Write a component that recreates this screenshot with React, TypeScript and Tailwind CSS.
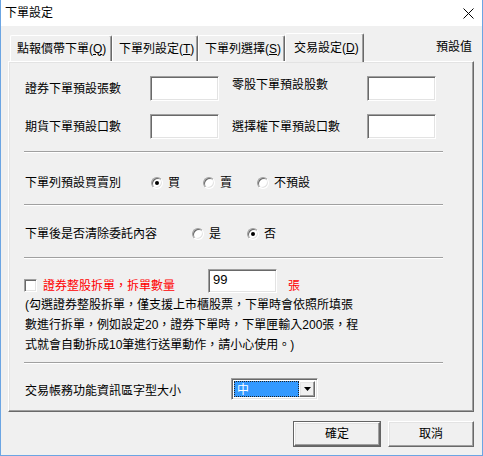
import React from "react";

const sunken =
  "border border-t-[#a0a0a0] border-l-[#a0a0a0] border-b-white border-r-white shadow-[inset_1px_1px_0_#696969,inset_-1px_-1px_0_#e3e3e3] bg-white";
const raised =
  "border border-t-white border-l-white border-b-[#696969] border-r-[#696969] shadow-[inset_-1px_-1px_0_#a0a0a0,inset_1px_1px_0_#e3e3e3]";

function Tab({ label, k, w, active }: { label: string; k: string; w: string; active?: boolean }) {
  return (
    <div
      className={`${w} ${raised} border-b-0 rounded-t-[2px] bg-[#f0f0f0] flex items-center shadow-[inset_-1px_0_0_#a0a0a0] ${
        active ? "h-[29px] pl-[8px] relative z-10 translate-y-[1px]" : "h-[26px] pl-[6px]"
      }`}
    >
      <span className="leading-[14px]">
        {label}(<span className="underline">{k}</span>)
      </span>
    </div>
  );
}

function Box({ w = "w-[69px]", h = "h-[25px]", children }: { w?: string; h?: string; children?: React.ReactNode }) {
  return <div className={`${w} ${h} ${sunken} shrink-0 pl-[4px] pt-[3px] leading-[14px] text-[13px]`}>{children}</div>;
}

function Radio({ checked, label, w }: { checked?: boolean; label: string; w: string }) {
  return (
    <div className={`${w} flex items-center gap-[5px]`}>
      <div className="w-[12px] h-[12px] rounded-full bg-white border border-t-[#a0a0a0] border-l-[#a0a0a0] border-b-white border-r-white shadow-[inset_1px_1px_0_#696969,inset_-1px_-1px_0_#e3e3e3] flex items-center justify-center">
        {checked && <div className="w-[4px] h-[4px] rounded-full bg-black" />}
      </div>
      <span className="leading-[14px]">{label}</span>
    </div>
  );
}

function Sep() {
  return <div className="ml-[15px] w-[419px] h-[2px] border-t border-t-[#a0a0a0] border-b border-b-white" />;
}

export default function App() {
  return (
    <div className="w-[483px] h-[456px] bg-[#f0f0f0] border-l border-r border-b border-[#6ba5e3] flex flex-col text-[12px] text-black font-['Liberation_Sans','Noto_Sans_CJK_TC',sans-serif]">
      <div className="h-[26px] bg-white flex items-center justify-between pl-[4px] pr-[8px] shrink-0">
        <span className="leading-[14px]">下單設定</span>
        <svg width="11" height="11" viewBox="0 0 11 11">
          <path d="M0.5 0.5 L10.5 10.5 M10.5 0.5 L0.5 10.5" stroke="#000" strokeWidth="1" />
        </svg>
      </div>

      <div className="mt-[7px] h-[28px] pl-[9px] pr-[10px] flex items-end shrink-0">
        <Tab label="點報價帶下單" k="Q" w="w-[102px]" />
        <Tab label="下單列設定" k="T" w="w-[86px]" />
        <Tab label="下單列選擇" k="S" w="w-[87px]" />
        <Tab label="交易設定" k="D" w="w-[79px]" active />
        <span className="ml-auto self-center leading-[14px]">預設值</span>
      </div>

      <div className={`ml-[7px] w-[466px] h-[351px] shrink-0 ${raised} flex flex-col`}>
        <div className="mt-[14px] pl-[16px] flex items-center h-[25px]">
          <span className="w-[125px] leading-[14px]">證券下單預設張數</span>
          <Box />
          <span className="ml-[13px] w-[135px] leading-[14px] mb-[8px]">零股下單預設股數</span>
          <Box />
        </div>
        <div className="mt-[13px] pl-[16px] flex items-center h-[25px]">
          <span className="w-[125px] leading-[14px]">期貨下單預設口數</span>
          <Box />
          <span className="ml-[13px] w-[135px] leading-[14px]">選擇權下單預設口數</span>
          <Box />
        </div>

        <div className="mt-[12px]">
          <Sep />
        </div>

        <div className="mt-[22px] h-[16px] pl-[16px] flex items-center">
          <span className="w-[126px] leading-[14px]">下單列預設買賣別</span>
          <Radio checked label="買" w="w-[52px]" />
          <Radio label="賣" w="w-[54px]" />
          <Radio label="不預設" w="w-[60px]" />
        </div>

        <div className="mt-[13px]">
          <Sep />
        </div>

        <div className="mt-[20px] h-[16px] pl-[16px] flex items-center">
          <span className="w-[167px] leading-[14px]">下單後是否清除委託內容</span>
          <Radio label="是" w="w-[55px]" />
          <Radio checked label="否" w="w-[40px]" />
        </div>

        <div className="mt-[15px]">
          <Sep />
        </div>

        <div className="mt-[10px] h-[24px] pl-[15px] flex items-end">
          <div className="w-[184px] flex items-end gap-[6px]">
            <div className={`w-[13px] h-[13px] ${sunken} mb-[1px]`} />
            <span className="leading-[14px] text-[#ff0000]">證券整股拆單，拆單數量</span>
          </div>
          <Box h="h-[24px]">99</Box>
          <span className="ml-[11px] leading-[14px] text-[#ff0000]">張</span>
        </div>

        <p className="mt-[2px] pl-[16px] leading-[20px]">
          (勾選證券整股拆單，僅支援上市櫃股票，下單時會依照所填張
          <br />
          數進行拆單，例如設定20，證券下單時，下單匣輸入200張，程
          <br />
          式就會自動拆成10筆進行送單動作，請小心使用。)
        </p>

        <div className="mt-[7px]">
          <Sep />
        </div>

        <div className="mt-[14px] h-[22px] pl-[16px] flex items-center">
          <span className="w-[206px] leading-[14px] mt-[4px]">交易帳務功能資訊區字型大小</span>
          <div className={`w-[87px] h-[22px] ${sunken} p-[2px] flex`}>
            <div className="flex-1 bg-[#3399ff] border border-dotted border-[#222] text-white leading-[14px] pl-[2px] pt-[1px]">
              中
            </div>
            <div className={`w-[16px] bg-[#f0f0f0] ${raised} flex items-center justify-center`}>
              <svg width="7" height="4" viewBox="0 0 7 4">
                <path d="M0 0 H7 L3.5 4 Z" fill="#000" />
              </svg>
            </div>
          </div>
        </div>
      </div>

      <div className="mt-[9px] pr-[8px] flex justify-end gap-[7px] shrink-0">
        <div className="w-[88px] h-[26px] border border-[#646464]">
          <div className={`w-full h-full ${raised} flex items-center justify-center leading-[14px]`}>確定</div>
        </div>
        <div className={`w-[86px] h-[26px] ${raised} flex items-center justify-center leading-[14px]`}>取消</div>
      </div>
    </div>
  );
}
